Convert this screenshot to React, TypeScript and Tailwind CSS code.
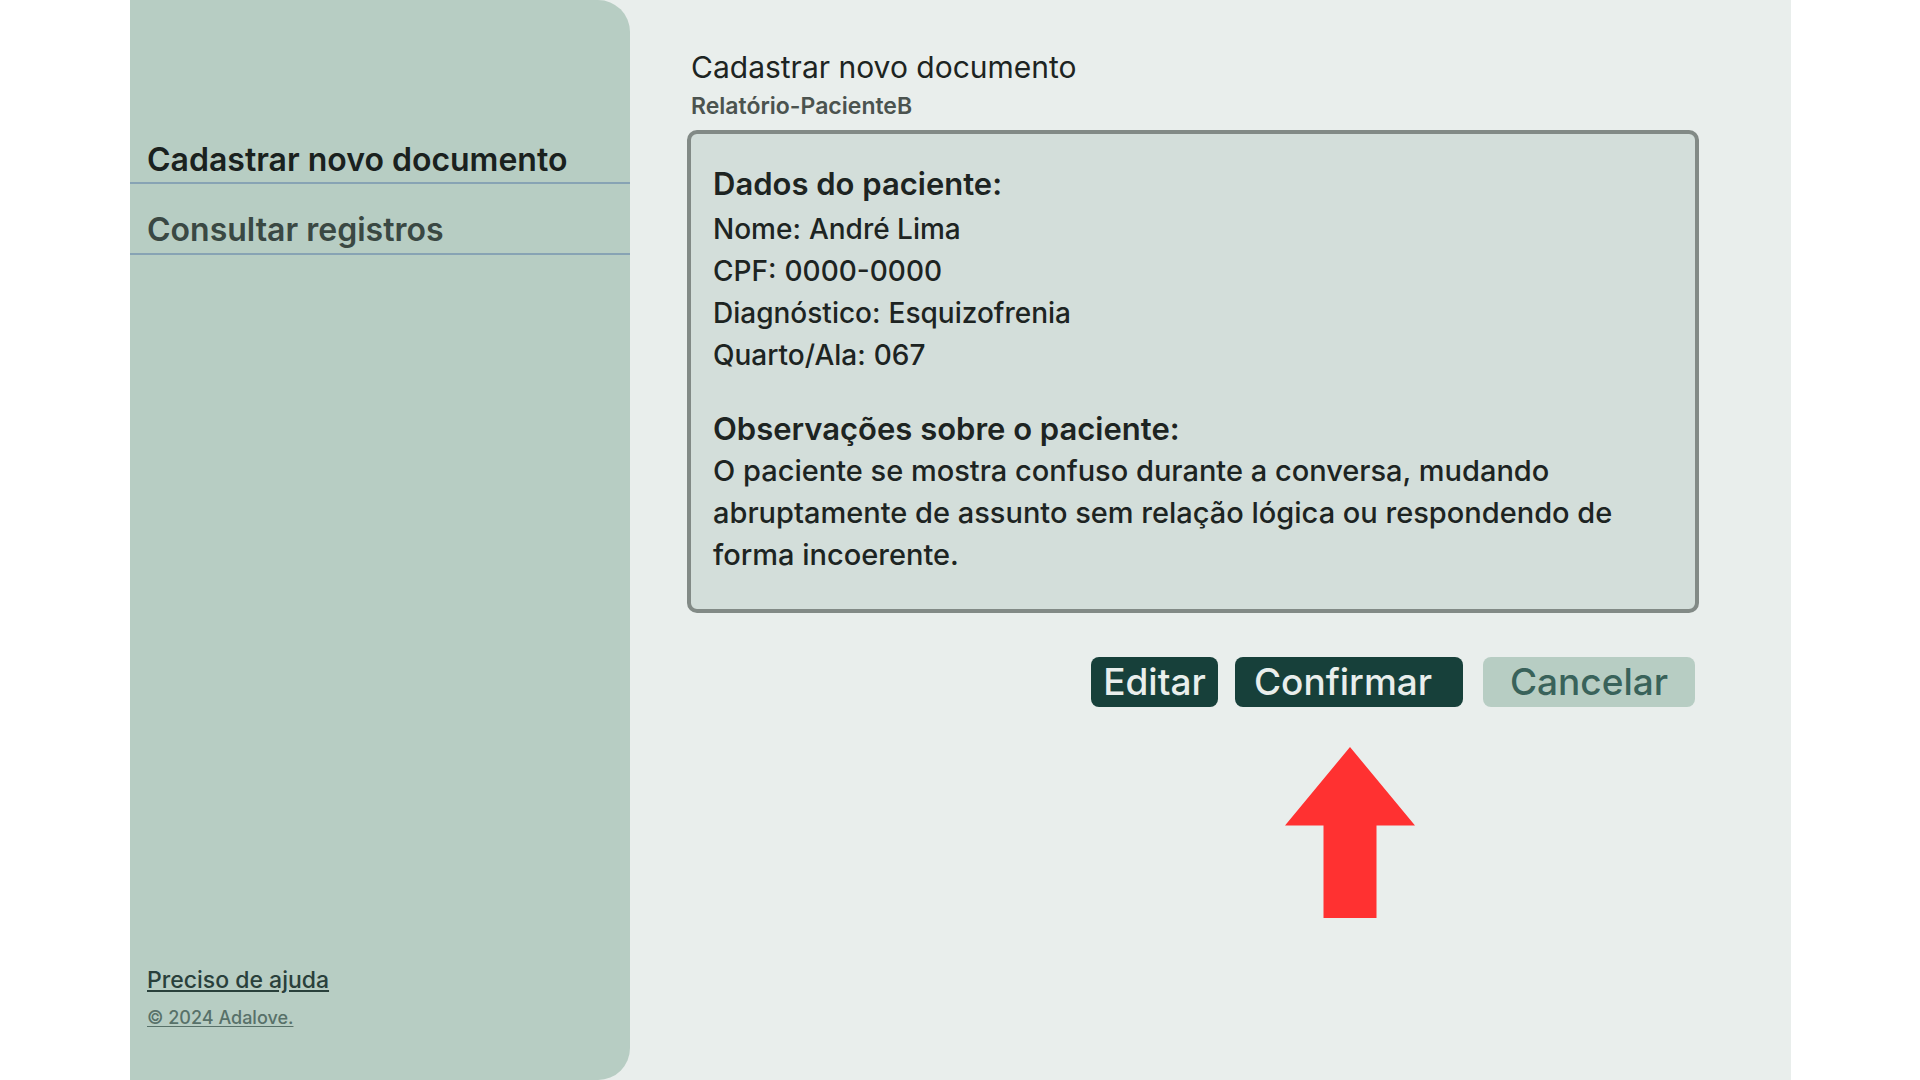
const patient = [
  ['Nome', 'André Lima'],
  ['CPF', '0000-0000'],
  ['Diagnóstico', 'Esquizofrenia'],
  ['Quarto/Ala', '067'],
];

function Sidebar() {
  return (
    <aside className="flex w-[500px] shrink-0 flex-col justify-between rounded-r-[32px] bg-[#b7cdc3] pt-[114px] pb-12">
      <nav className="flex flex-col text-[32px] leading-10 font-semibold">
        <a href="#cadastrar" className="h-[70px] border-b-2 border-[#87a3b4] px-[17px] pt-[26px] whitespace-nowrap text-[#1a211e]">
          Cadastrar novo documento
        </a>
        <a href="#consultar" className="h-[71px] border-b-2 border-[#87a3b4] px-[17px] pt-[26px] whitespace-nowrap text-[#3a4843]">
          Consultar registros
        </a>
      </nav>
      <footer className="flex flex-col items-start gap-2 px-[17px] font-medium">
        <a href="#ajuda" className="text-[23px] leading-8 text-[#29403b] underline underline-offset-2">
          Preciso de ajuda
        </a>
        <a href="#sobre" className="text-lg leading-7 text-[#587169] underline underline-offset-2">
          © 2024 Adalove.
        </a>
      </footer>
    </aside>
  );
}

function Arrow() {
  return (
    <svg viewBox="0 0 130 171" className="mt-10 mr-[284px] h-[171px] w-[130px] self-end" fill="#ff3131" aria-hidden="true">
      <path d="M65 0 130 78.500H91.500V171H38.500V78.500H0Z" />
    </svg>
  );
}

export default function App() {
  return (
    <div className="min-h-screen bg-white pr-[129px] pl-[130px] font-['Inter',sans-serif]">
      <div className="flex min-h-screen bg-[#e9eeec]">
        <Sidebar />
        <main className="flex min-w-0 flex-1 flex-col pt-[47px] pr-[92px] pl-[57px]">
          <h1 className="px-1 text-[30px] leading-10 text-[#1d2422]">Cadastrar novo documento</h1>
          <p className="px-1 pt-[5px] text-[23px] leading-7 font-semibold text-[#4b534f]">Relatório-PacienteB</p>
          <article className="mt-[10px] rounded-[10px] border-4 border-[#828a86] bg-[#d3deda] px-[22px] pt-[29px] pb-[33px] leading-[42px] font-medium text-[#1d2422]">
            <section>
              <h2 className="mb-[3px] text-[31px] font-semibold">Dados do paciente:</h2>
              <dl className="text-[28px]">
                {patient.map(([label, value]) => (
                  <div key={label} className="flex gap-2">
                    <dt>{label}:</dt>
                    <dd>{value}</dd>
                  </div>
                ))}
              </dl>
            </section>
            <section className="mt-8">
              <h2 className="text-[31px] font-semibold">Observações sobre o paciente:</h2>
              <p className="text-[29px]">
                O paciente se mostra confuso durante a conversa, mudando abruptamente de assunto sem
                relação lógica ou respondendo de forma incoerente.
              </p>
            </section>
          </article>
          <div className="mt-11 mr-1 flex justify-end text-[37px] leading-[50px] font-medium">
            <button type="button" className="w-[127px] rounded-lg bg-[#17403a] text-[#e9eeec]">Editar</button>
            <button type="button" className="ml-[17px] w-[228px] rounded-lg bg-[#17403a] pr-3 text-[#e9eeec]">Confirmar</button>
            <button type="button" className="ml-5 w-[212px] rounded-lg bg-[#b7cdc3] text-[#39625a]">Cancelar</button>
          </div>
          <Arrow />
        </main>
      </div>
    </div>
  );
}
